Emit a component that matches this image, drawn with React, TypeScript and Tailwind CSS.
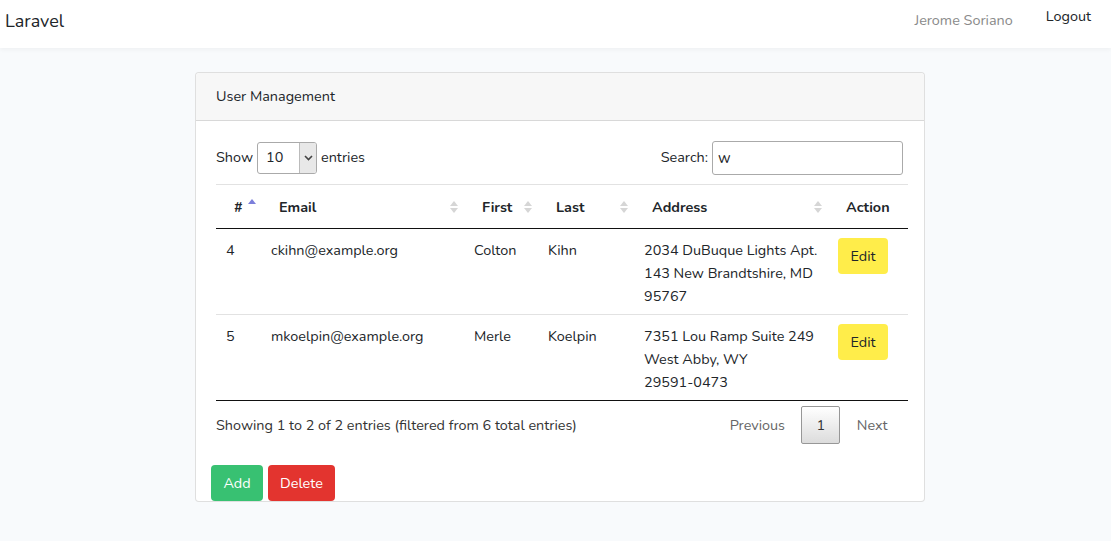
import React from 'react';

type Row = { id: number; email: string; first: string; last: string; address: string[] };

const rows: Row[] = [
  { id: 4, email: 'ckihn@example.org', first: 'Colton', last: 'Kihn', address: ['2034 DuBuque Lights Apt.', '143 New Brandtshire, MD', '95767'] },
  { id: 5, email: 'mkoelpin@example.org', first: 'Merle', last: 'Koelpin', address: ['7351 Lou Ramp Suite 249', 'West Abby, WY', '29591-0473'] },
];

function SortBoth() {
  return (
    <svg width="8" height="14" viewBox="0 0 8 14" className="absolute right-[6px] top-1/2 -translate-y-1/2">
      <polygon points="4,1 8,6 0,6" fill="#d6d6d6" />
      <polygon points="0,8 8,8 4,13" fill="#d6d6d6" />
    </svg>
  );
}

function SortAsc() {
  return (
    <svg width="8" height="14" viewBox="0 0 8 14" className="absolute right-[5px] top-[13px]">
      <polygon points="4,1 8,6 0,6" fill="#7c7fdb" />
    </svg>
  );
}

export default function App() {
  const th = 'relative text-left font-bold pt-[11px] pb-[9px] pl-[18px] pr-[18px] border-b border-[#111]';
  const td = 'align-top pt-[10px] pb-[6px] px-[10px]';
  return (
    <div className="min-h-screen bg-[#f8fafc] font-['Nunito','Noto_Sans',sans-serif] text-[14.4px] leading-[1.6] text-[#212529]">
      {/* navbar */}
      <nav className="h-[48px] bg-white shadow-[0_2px_4px_rgba(0,0,0,0.04)] flex items-start justify-between pl-[5px] pr-[20px]">
        <span className="text-[18px] text-[#212529] mt-[7px]">Laravel</span>
        <div className="flex items-start gap-[33px]">
          <span className="text-[#8a8a8a] mt-[9px]">Jerome Soriano</span>
          <span className="text-[#212529] mt-[5px]">Logout</span>
        </div>
      </nav>

      <main className="pt-[24px] pb-[38px]">
        <div className="ml-[195px] w-[730px] bg-white border border-[rgba(0,0,0,0.125)] rounded-[4px]">
          <div className="h-[48px] px-[20px] flex items-center bg-[#f7f7f7] border-b border-[rgba(0,0,0,0.125)] rounded-t-[4px]">
            User Management
          </div>

          <div className="pt-[20px] pl-[20px] pr-[20px]">
            {/* controls */}
            <div className="flex items-center justify-between h-[34px]">
              <div className="flex items-center gap-[4px]">
                <span>Show</span>
                <div className="flex h-[32px] w-[60px] border border-[#aaa] rounded-[3px] overflow-hidden bg-white">
                  <span className="flex-1 pl-[8px] flex items-center">10</span>
                  <span className="w-[17px] bg-[#e8e8e8] border-l border-[#bbb] flex items-center justify-center">
                    <svg width="9" height="6" viewBox="0 0 9 6"><path d="M1 1l3.5 3.5L8 1" stroke="#444" strokeWidth="1.6" fill="none" /></svg>
                  </span>
                </div>
                <span>entries</span>
              </div>
              <div className="flex items-center gap-[4px] mr-[1px]">
                <span>Search:</span>
                <div className="h-[34px] w-[191px] border border-[#aaa] rounded-[3px] flex items-center pl-[5px] text-[15px]">w</div>
              </div>
            </div>

            {/* table */}
            <table className="mt-[9px] w-[692px] border-collapse border-t border-[#e2e2e2]">
              <thead>
                <tr className="h-[44px]">
                  <th className={`${th} w-[45px]`}>#<SortAsc /></th>
                  <th className={`${th} w-[203px]`}>Email<SortBoth /></th>
                  <th className={`${th} w-[74px]`}>First<SortBoth /></th>
                  <th className={`${th} w-[96px]`}>Last<SortBoth /></th>
                  <th className={`${th} w-[194px]`}>Address<SortBoth /></th>
                  <th className={`${th} w-[80px]`}>Action</th>
                </tr>
              </thead>
              <tbody>
                {rows.map((r, i) => (
                  <tr key={r.id} className={i === rows.length - 1 ? 'border-b border-[#111]' : 'border-b border-[#e2e2e2]'}>
                    <td className={td}>{r.id}</td>
                    <td className={td}>{r.email}</td>
                    <td className={td}>{r.first}</td>
                    <td className={td}>{r.last}</td>
                    <td className={`${td} leading-[23px]`}>
                      {r.address.map((a) => (
                        <div key={a}>{a}</div>
                      ))}
                    </td>
                    <td className="align-top pt-[9px] px-[10px]">
                      <button className="h-[36px] w-[50px] bg-[#ffed4a] rounded-[4px] text-[#212529]">Edit</button>
                    </td>
                  </tr>
                ))}
              </tbody>
            </table>

            {/* footer */}
            <div className="w-[692px] mt-[5px] flex items-center justify-between">
              <span className="text-[#333]">Showing 1 to 2 of 2 entries (filtered from 6 total entries)</span>
              <div className="flex items-center gap-[2px] mr-[6px]">
                <span className="px-[14.4px] py-[7px] text-[#666]">Previous</span>
                <span className="h-[38px] w-[39px] flex items-center justify-center border border-[#979797] rounded-[2px] bg-gradient-to-b from-white to-[#dcdcdc] text-[#333]">1</span>
                <span className="px-[14.4px] py-[7px] text-[#666]">Next</span>
              </div>
            </div>

            {/* actions */}
            <div className="mt-[21px] -ml-[5px] flex gap-[5px]">
              <button className="h-[36px] w-[52px] bg-[#38c172] text-white rounded-[4px]">Add</button>
              <button className="h-[36px] w-[67px] bg-[#e3342f] text-white rounded-[4px]">Delete</button>
            </div>
          </div>
        </div>
      </main>
    </div>
  );
}
